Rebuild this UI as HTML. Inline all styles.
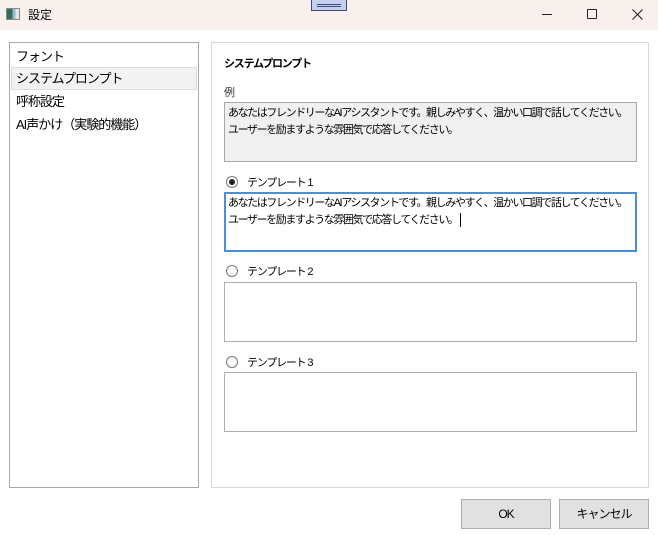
<!DOCTYPE html>
<html><head><meta charset="utf-8"><style>
*{box-sizing:border-box;margin:0;padding:0}
body{width:658px;height:535px;background:#fff;position:relative;overflow:hidden;font-family:"Liberation Sans","Noto Sans CJK JP",sans-serif;color:#000}
.a{position:absolute}
.tb{left:0;top:0;width:658px;height:30px;background:#f7f0ed}
.list{left:9px;top:42px;width:190px;height:446px;border:1px solid #a8a8a8}
.it{position:absolute;left:6px;font-size:13px;letter-spacing:-1px;line-height:22px;white-space:nowrap}
.panel{left:211px;top:42px;width:438px;height:446px;border:1px solid #d6d6d6}
.box{position:absolute;left:224px;width:413px;height:60px;border:1px solid #abadb3;background:#fff;font-size:11px;letter-spacing:-1.4px;line-height:17px;padding:2px 3px;white-space:nowrap}
.lbl{position:absolute;font-size:11px;letter-spacing:-1.2px;white-space:nowrap}
.rd{position:absolute;left:226px;width:12px;height:12px;border:1px solid #777;border-radius:50%;background:#fff}
.btn{position:absolute;top:499px;width:90px;height:30px;background:#e1e1e1;border:1px solid #adadad;font-size:12px;text-align:center;line-height:28px;letter-spacing:-1px}
</style></head><body>
<div class="a tb"></div>
<div class="a" style="left:6px;top:8px;width:14px;height:12px;border:1px solid #888;background:linear-gradient(90deg,#2f6f5a 0 45%,#9cb8c8 45% 70%,#e0e8ee 70%)"></div>
<div class="a" style="left:28px;top:6px;font-size:12px">設定</div>
<div class="a" style="left:311px;top:-1px;width:36px;height:12px;background:#c5cff0;border:1px solid #3c4a7a"></div>
<div class="a" style="left:317px;top:4px;width:24px;height:1px;background:#3c4a7a"></div>
<div class="a" style="left:317px;top:6px;width:24px;height:1px;background:#3c4a7a"></div>
<div class="a" style="left:542px;top:14px;width:10px;height:1px;background:#222"></div>
<div class="a" style="left:587px;top:9px;width:10px;height:10px;border:1px solid #222;border-radius:1px"></div>
<svg class="a" style="left:632px;top:9px" width="11" height="11"><path d="M0.5 0.5L10.5 10.5M10.5 0.5L0.5 10.5" stroke="#222" stroke-width="1.1"/></svg>

<div class="a list">
<div class="it" style="top:3px">フォント</div>
<div style="position:absolute;left:1px;top:24px;width:186px;height:23px;background:#f2f2f2;border:1px solid #dcdcdc"></div>
<div class="it" style="top:25px">システムプロンプト</div>
<div class="it" style="top:48px">呼称設定</div>
<div class="it" style="top:71px">AI声かけ（実験的機能）</div>
</div>

<div class="a panel"></div>
<div class="lbl" style="left:224px;top:55px;font-weight:bold;font-size:11px">システムプロンプト</div>
<div class="lbl" style="left:224px;top:84px;color:#333">例</div>
<div class="box" style="top:102px;background:#f0f0f0;border-color:#a8a8a8">あなたはフレンドリーなAIアシスタントです。親しみやすく、温かい口調で話してください。<br>ユーザーを励ますような雰囲気で応答してください。</div>

<div class="rd" style="top:176px"><div style="position:absolute;left:2px;top:2px;width:6px;height:6px;border-radius:50%;background:#222"></div></div>
<div class="lbl" style="left:247px;top:174px">テンプレート 1</div>
<div class="box" style="top:192px;border:2px solid #4a8fd8;padding:1px 2px">あなたはフレンドリーなAIアシスタントです。親しみやすく、温かい口調で話してください。<br>ユーザーを励ますような雰囲気で応答してください。<span style="display:inline-block;width:1px;height:14px;background:#000;vertical-align:middle;margin-left:2px"></span></div>

<div class="rd" style="top:265px"></div>
<div class="lbl" style="left:247px;top:263px">テンプレート 2</div>
<div class="box" style="top:282px"></div>

<div class="rd" style="top:356px"></div>
<div class="lbl" style="left:247px;top:354px">テンプレート 3</div>
<div class="box" style="top:372px"></div>

<div class="btn" style="left:461px">OK</div>
<div class="btn" style="left:559px">キャンセル</div>
</body></html>
